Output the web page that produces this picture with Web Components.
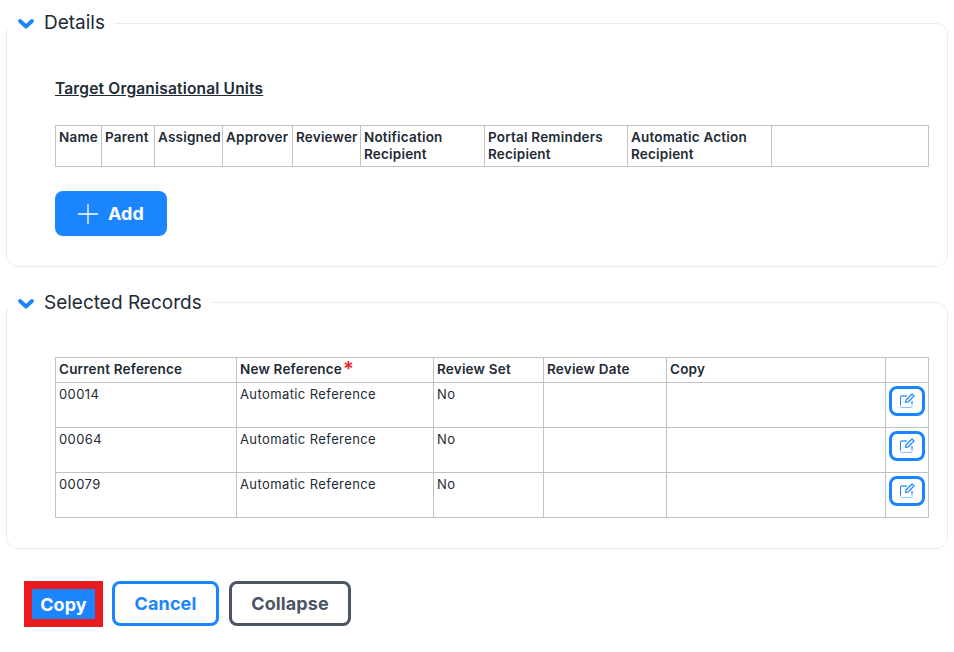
<!DOCTYPE html>
<html>
<head>
<meta charset="utf-8">
<style>
  html, body { margin: 0; background: #fff; }
  body { font-family: Inter, "Liberation Sans", sans-serif; color: #212b36; }
</style>
</head>
<body>
<copy-page>
  <form-panel label="Details" style="height:244px">
    <section-title>Target Organisational Units</section-title>
    <data-table id="units" style="margin-top:26px"></data-table>
    <app-button kind="primary" icon="plus" style="margin-top:24px">Add</app-button>
  </form-panel>
  <form-panel label="Selected Records" style="margin-top:35px;height:247px;--legend-pad:4px">
    <data-table id="records" style="margin-top:-1px"></data-table>
  </form-panel>
  <action-bar>
    <red-frame><app-button kind="small">Copy</app-button></red-frame>
    <app-button kind="outline">Cancel</app-button>
    <app-button kind="dark" style="margin-left:1px">Collapse</app-button>
  </action-bar>
</copy-page>

<script>
class CopyPage extends HTMLElement {
  constructor() {
    super();
    this.attachShadow({ mode: "open" }).innerHTML = `
      <style>:host { display:block; padding:23px 6px 0; }</style>
      <slot></slot>`;
  }
}

class FormPanel extends HTMLElement {
  constructor() {
    super();
    this.attachShadow({ mode: "open" }).innerHTML = `
      <style>
        :host { display:block; box-sizing:border-box; border:1px solid #e9edf2; border-radius:12px; padding:0 18px 0 48px; }
        .legend { display:flex; align-items:center; gap:9px; box-sizing:border-box; width:max-content; height:16px; margin:-10px 0 0 -50px; padding:var(--legend-pad, 2px) 9px 0 12px; background:#fff; font-size:19px; line-height:16px; }
        svg { width:18px; height:12px; display:block; margin-top:1px; }
        .body { padding-top:49px; }
      </style>
      <div class="legend">
        <svg viewBox="0 0 18 12"><path d="M3 3l6 5.500L15 3" fill="none" stroke="#1a85ff" stroke-width="3.800" stroke-linecap="round" stroke-linejoin="round"/></svg>
        <span>${this.getAttribute("label")}</span>
      </div>
      <div class="body"><slot></slot></div>`;
  }
}

class SectionTitle extends HTMLElement {
  constructor() {
    super();
    this.attachShadow({ mode: "open" }).innerHTML = `
      <style>:host { display:block; font-size:15.5px; font-weight:600; line-height:20px; text-decoration:underline; letter-spacing:.18px; }</style>
      <slot></slot>`;
  }
}

// columns: [{ title, width, required }], rows: arrays of cell text, last column may hold an edit button
class DataTable extends HTMLElement {
  constructor() {
    super();
    this.attachShadow({ mode: "open" });
  }
  set data(d) {
    let head = d.columns.map(c =>
      `<th style="width:${c.width}px">${c.title}${c.required ? '<i>*</i>' : ""}</th>`).join("");
    let rows = d.rows.map(r =>
      `<tr>${r.map(v => `<td>${v === "edit" ? "<edit-button></edit-button>" : v}</td>`).join("")}</tr>`).join("");
    this.shadowRoot.innerHTML = `
      <style>
        :host { display:block; }
        table { border-collapse:collapse; table-layout:fixed; width:873px; font-size:13px; letter-spacing:.4px; }
        th, td { border:1px solid #bfc3c7; padding:3px; vertical-align:top; text-align:left; line-height:17px; box-sizing:border-box; }
        th { font-size:13.500px; letter-spacing:.2px; font-weight:600; height:${d.headHeight}px; }
        td { height:45px; font-weight:400; position:relative; }
        i { color:#e8212c; font-style:normal; font-size:20px; line-height:10px; margin-left:1px; vertical-align:-2px; }
      </style>
      <table><tr>${head}</tr>${rows}</table>`;
  }
}

class EditButton extends HTMLElement {
  constructor() {
    super();
    this.attachShadow({ mode: "open" }).innerHTML = `
      <style>
        :host { display:flex; align-items:center; justify-content:center; box-sizing:border-box; position:absolute; right:3px; top:3px; width:36px; height:30px; border:3px solid #1a85ff; border-radius:8px; background:#fff; }
        svg { width:16px; height:16px; display:block; }
      </style>
      <svg viewBox="0 0 16 16" fill="none">
        <path d="M8 3H2.500a1 1 0 0 0-1 1v9.500a1 1 0 0 0 1 1H12a1 1 0 0 0 1-1V8" stroke="#8cc2ff" stroke-width="1"/>
        <path d="M8 3H2.500a1 1 0 0 0-1 1V12M13 8v3" stroke="#1a85ff" stroke-width="1"/>
        <path d="M6.500 9.500l.5-2.500 6-6 2 2-6 6z" stroke="#1a85ff" stroke-width="1.200" stroke-linejoin="round"/>
      </svg>`;
  }
}

class AppButton extends HTMLElement {
  constructor() {
    super();
    let plus = this.getAttribute("icon") === "plus"
      ? '<svg viewBox="0 0 20 20"><path d="M10 0v20M0 10h20" stroke="#fff" stroke-width="1.300"/></svg>' : "";
    this.attachShadow({ mode: "open" }).innerHTML = `
      <style>
        :host { display:inline-flex; align-items:center; justify-content:center; box-sizing:border-box; height:45px; font-size:18px; font-weight:700; letter-spacing:.1px; border-radius:8px; }
        svg { width:20px; height:20px; display:block; margin-right:10px; }
        :host([kind=primary]) { width:112px; background:#1a85ff; color:#fff; }
        :host([kind=small]) { height:30px; width:63px; background:#1a85ff; color:#fff; border-radius:0; }
        :host([kind=outline]) { width:107px; border:3px solid #1a85ff; color:#1a85ff; background:#fff; }
        :host([kind=dark]) { width:122px; border:3px solid #4b5563; color:#4b5563; background:#fff; }
      </style>
      ${plus}<slot></slot>`;
  }
}

class RedFrame extends HTMLElement {
  constructor() {
    super();
    this.attachShadow({ mode: "open" }).innerHTML = `
      <style>:host { display:flex; border:8px solid #e81c1f; }</style>
      <slot></slot>`;
  }
}

class ActionBar extends HTMLElement {
  constructor() {
    super();
    this.attachShadow({ mode: "open" }).innerHTML = `
      <style>:host { display:flex; align-items:flex-start; gap:9px; margin:32px 0 0 18px; }</style>
      <slot></slot>`;
  }
}

customElements.define("copy-page", CopyPage);
customElements.define("form-panel", FormPanel);
customElements.define("section-title", SectionTitle);
customElements.define("data-table", DataTable);
customElements.define("edit-button", EditButton);
customElements.define("app-button", AppButton);
customElements.define("red-frame", RedFrame);
customElements.define("action-bar", ActionBar);

document.getElementById("units").data = {
  headHeight: 41,
  columns: [
    { title: "Name", width: 46 }, { title: "Parent", width: 53 }, { title: "Assigned", width: 68 },
    { title: "Approver", width: 70 }, { title: "Reviewer", width: 68 },
    { title: "Notification Recipient", width: 124 }, { title: "Portal Reminders Recipient", width: 143 },
    { title: "Automatic Action Recipient", width: 144 }, { title: "", width: 157 }
  ],
  rows: []
};
document.getElementById("records").data = {
  headHeight: 25,
  columns: [
    { title: "Current Reference", width: 181 }, { title: "New Reference", width: 197, required: true },
    { title: "Review Set", width: 110 }, { title: "Review Date", width: 123 },
    { title: "Copy", width: 219 }, { title: "", width: 43 }
  ],
  rows: [
    ["00014", "Automatic Reference", "No", "", "", "edit"],
    ["00064", "Automatic Reference", "No", "", "", "edit"],
    ["00079", "Automatic Reference", "No", "", "", "edit"]
  ]
};
</script>
</body>
</html>
